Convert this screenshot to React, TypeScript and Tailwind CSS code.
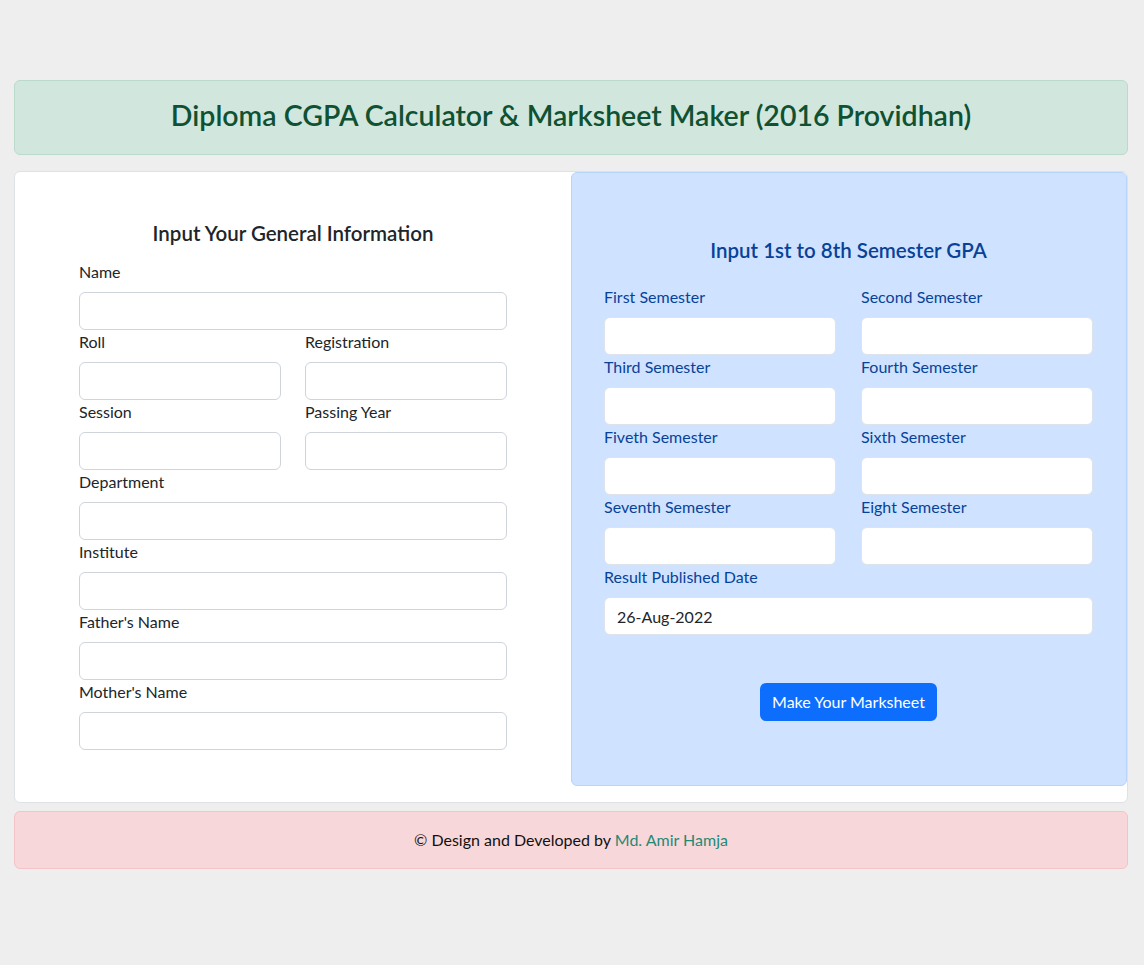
import React from "react";

const font = { fontFamily: "Lato, 'Noto Sans', sans-serif" };

function Field({ label, blue, value }: { label: string; blue?: boolean; value?: string }) {
  return (
    <div className="flex flex-col">
      <label className={`block text-[16px] leading-[24px] mb-[8px] ${blue ? "text-[#084298]" : "text-[#212529]"}`}>{label}</label>
      <input
        defaultValue={value}
        className={`h-[38px] w-full bg-white rounded-[6px] border px-[12px] text-[16px] text-[#212529] outline-none ${blue ? "border-[#dde3ea]" : "border-[#ced4da]"}`}
      />
    </div>
  );
}

export default function App() {
  return (
    <div style={font} className="min-h-[965px] bg-[#eeeeee] pt-[80px] pl-[14px] pr-[16px] pb-[96px] text-[#212529]">
      <div className="h-[75px] rounded-[6px] border border-[#badbcc] bg-[#d1e7dd] flex items-center justify-center pb-[5px]">
        <h1 className="text-[28.5px] leading-[34px] font-semibold text-[#0f5132]">Diploma CGPA Calculator &amp; Marksheet Maker (2016 Providhan)</h1>
      </div>

      <div className="mt-[16px] h-[632px] rounded-[6px] border border-[#dee2e6] bg-white flex">
        <div className="w-[556px] pt-[49px] px-[64px]">
          <h2 className="text-[20.5px] leading-[24px] font-semibold text-center mb-[15px] text-[#212529]">Input Your General Information</h2>
          <div className="flex flex-col">
            <Field label="Name" />
            <div className="grid grid-cols-2 gap-x-[24px]">
              <Field label="Roll" />
              <Field label="Registration" />
              <Field label="Session" />
              <Field label="Passing Year" />
            </div>
            <Field label="Department" />
            <Field label="Institute" />
            <Field label="Father's Name" />
            <Field label="Mother's Name" />
          </div>
        </div>
        <div className="flex-1 h-[614px] rounded-[6px] border border-[#b6d4fe] bg-[#cfe2ff] pt-[65px] pl-[32px] pr-[33px]">
          <h2 className="text-[20.5px] leading-[24px] font-semibold text-center mb-[23px] text-[#084298]">Input 1st to 8th Semester GPA</h2>
          <div className="grid grid-cols-2 gap-x-[25px]">
            <Field blue label="First Semester" />
            <Field blue label="Second Semester" />
            <Field blue label="Third Semester" />
            <Field blue label="Fourth Semester" />
            <Field blue label="Fiveth Semester" />
            <Field blue label="Sixth Semester" />
            <Field blue label="Seventh Semester" />
            <Field blue label="Eight Semester" />
          </div>
          <Field blue label="Result Published Date" value="26-Aug-2022" />
          <div className="flex justify-center mt-[48px]">
            <button className="h-[38px] px-[12px] rounded-[6px] bg-[#0d6efd] text-white text-[16px] leading-[24px]">Make Your Marksheet</button>
          </div>
        </div>
      </div>

      <div className="mt-[8px] h-[58px] rounded-[6px] border border-[#f5c2c7] bg-[#f8d7da] flex items-center justify-center text-[16px] text-[#111]">
        <span>
          © Design and Developed by <span className="text-[#1f8a76]">Md. Amir Hamja</span>
        </span>
      </div>
    </div>
  );
}
